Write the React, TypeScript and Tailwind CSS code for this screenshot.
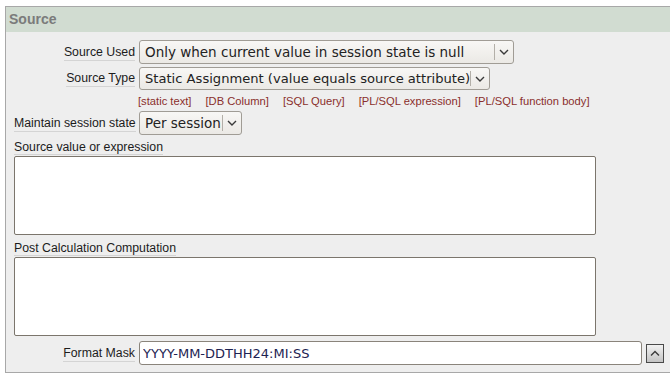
import React from 'react';

const Chevron: React.FC<{ up?: boolean }> = ({ up }) => (
  <svg width="10" height="6" viewBox="0 0 10 6" className="block">
    <polyline
      points={up ? '1,5.5 5,1.5 9,5.5' : '1,1 5,5 9,1'}
      fill="none"
      stroke="#3a3a3a"
      strokeWidth="1.4"
    />
  </svg>
);

const FakeSelect: React.FC<{ value: string; width: string; height?: string; size?: string }> = ({
  value,
  width,
  height = 'h-[24px]',
  size = 'text-[13.5px]',
}) => (
  <div
    className={`ml-[4px] flex ${width} ${height} items-stretch rounded-[3px] border border-[#a09c95] bg-gradient-to-b from-[#f8f7f5] to-[#ebe9e5] font-['DejaVu_Sans',sans-serif] ${size} text-[#222]`}
  >
    <div className="flex flex-1 items-center overflow-hidden whitespace-nowrap pl-[5px]">{value}</div>
    <div className="my-[3px] flex w-[19px] shrink-0 items-center justify-center border-l border-[#b3afa8]">
      <Chevron />
    </div>
  </div>
);

const RowLabel: React.FC<{ text: string }> = ({ text }) => (
  <div className="w-[121px] shrink-0 whitespace-nowrap text-right">
    <span className="inline-block border-b border-[#d4d4d4] leading-[15px]">{text}</span>
  </div>
);

const links = ['[static text]', '[DB Column]', '[SQL Query]', '[PL/SQL expression]', '[PL/SQL function body]'];

export default function App() {
  return (
    <div className="h-[380px] w-[670px] overflow-hidden bg-white pl-[5px] pt-[6px] font-['Liberation_Sans',Arial,sans-serif] text-[12.3px] text-[#1c1c1c]">
      <div className="border-b border-l border-t border-[#a8a8a8] bg-[#eeeeee]">
        {/* Header */}
        <div className="flex h-[25px] items-center bg-[#d1dcd1] pl-[3px] text-[14px] font-bold text-[#7b7b7b]">
          Source
        </div>

        {/* Body */}
        <div className="flex flex-col pb-[7px] pl-[8px] pt-[8px]">
          <div className="flex h-[24px] items-center">
            <RowLabel text="Source Used" />
            <FakeSelect value="Only when current value in session state is null" width="w-[375px]" />
          </div>

          <div className="mt-[3px] flex h-[23px] items-center">
            <RowLabel text="Source Type" />
            <FakeSelect
              value="Static Assignment (value equals source attribute)"
              width="w-[351px]"
              height="h-[23px]"
              size="text-[13.1px]"
            />
          </div>

          <div className="mt-[5px] flex h-[12px] gap-[14px] pl-[124px] text-[11.2px] leading-[12px] text-[#8a2f2c]">
            {links.map((l) => (
              <span key={l} className="cursor-pointer whitespace-nowrap">
                {l}
              </span>
            ))}
          </div>

          <div className="mt-[4px] flex h-[24px] items-center">
            <RowLabel text="Maintain session state" />
            <FakeSelect value="Per session" width="w-[103px]" />
          </div>

          <div className="mt-[3px] h-[15px]">
            <span className="inline-block border-b border-[#d4d4d4] leading-[14px]">Source value or expression</span>
          </div>
          <textarea className="mt-[3px] h-[79px] w-[582px] resize-none rounded-[2px] border border-[#7b756c] bg-white outline-none" />

          <div className="mt-[4px] h-[15px]">
            <span className="inline-block border-b border-[#d4d4d4] leading-[14px]">Post Calculation Computation</span>
          </div>
          <textarea className="mt-[3px] h-[79px] w-[582px] resize-none rounded-[2px] border border-[#7b756c] bg-white outline-none" />

          <div className="mt-[5px] flex h-[24px] items-center">
            <RowLabel text="Format Mask" />
            <input
              readOnly
              value="YYYY-MM-DDTHH24:MI:SS"
              className="ml-[4px] h-[24px] w-[503px] rounded-[3px] border border-[#8a847b] bg-white pl-[3px] font-['DejaVu_Sans',sans-serif] text-[13px] text-[#1d2352] outline-none"
            />
            <button className="ml-[4px] flex h-[19px] w-[18px] items-center justify-center border border-[#4a4a4a] bg-gradient-to-b from-[#f2f2f2] to-[#c4c4c4]">
              <Chevron up />
            </button>
          </div>
        </div>
      </div>
    </div>
  );
}
